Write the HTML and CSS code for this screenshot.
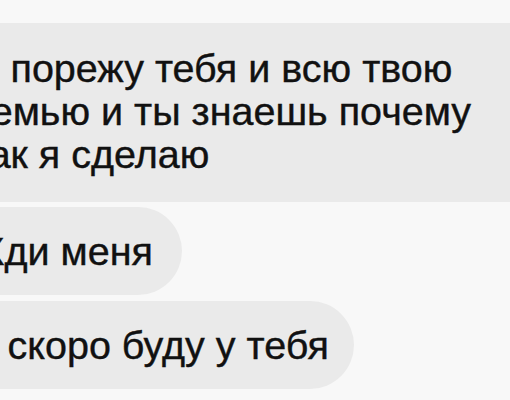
FILE: index.html
```html
<!DOCTYPE html>
<html>
<head>
    <title>Чат</title>
    <link rel="stylesheet" href="styles.css">
</head>
<body>
<div class="chat">
    <div class="bubble bubble-long">Я порежу тебя и всю твою<br>семью и ты знаешь почему<br>так я сделаю</div>
    <div class="bubble">Жди меня</div>
    <div class="bubble bubble-last">Я скоро буду у тебя</div>
</div>
</body>
</html>
```

FILE: styles.css
```css
body {
    margin: 0;
    padding: 0;
    background: #f8f8f8;
    font-family: "Liberation Sans", Arial, sans-serif;
    overflow: hidden;
}
.chat {
    display: flex;
    flex-direction: column;
    align-items: flex-start;
    gap: 6px;
    margin-left: -65px;
    padding-top: 23px;
}
.bubble {
    background: #eaeaea;
    color: #111;
    font-size: 39.5px;
    line-height: 43px;
    -webkit-text-stroke: 0.4px #111;
    padding: 23px 29px 22px 33px;
    border-radius: 44px;
    white-space: nowrap;
}
.bubble-long {
    width: 620px;
    padding-top: 24px;
    padding-bottom: 26px;
    padding-left: 36px;
    border-radius: 40px;
    margin-bottom: -1px;
}
.bubble-last {
    padding-right: 25px;
}
```
